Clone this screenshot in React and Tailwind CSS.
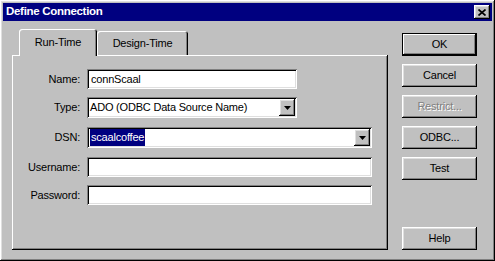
import React from 'react';

const raised =
  'shadow-[inset_-1px_-1px_#000,inset_1px_1px_#fff,inset_-2px_-2px_#808080,inset_2px_2px_#dfdfdf]';
const sunken =
  'shadow-[inset_1px_1px_#808080,inset_-1px_-1px_#fff,inset_2px_2px_#000,inset_-2px_-2px_#dfdfdf]';

// kleine schwarze Pfeilspitze für die Combo-Boxen
const DropArrow = () => (
  <svg width="7" height="4" viewBox="0 0 7 4">
    <polygon points="0,0 7,0 3.5,4" fill="#000" />
  </svg>
);

const TextBox = ({ width, children }) => (
  <div className={`h-[20px] bg-white flex items-center pl-[4px] ${sunken}`} style={{ width }}>
    {children}
  </div>
);

const ComboBox = ({ width, children }) => (
  <div className={`h-[21px] bg-white flex items-center pl-[3px] pr-[2px] ${sunken}`} style={{ width }}>
    <div className="flex-1 flex items-center">{children}</div>
    <div className={`w-[16px] h-[17px] bg-[#c0c0c0] flex items-center justify-center ${raised}`}>
      <DropArrow />
    </div>
  </div>
);

const Row = ({ label, mt, children }) => (
  <div className="flex items-center" style={{ marginTop: mt }}>
    <div className="w-[68px] text-right">{label}</div>
    <div className="ml-[7px]">{children}</div>
  </div>
);

const Btn = ({ children, def, disabled, className = '' }) => (
  <div
    className={`w-[75px] h-[23px] flex items-center justify-center ${
      def
        ? 'border border-black shadow-[inset_-1px_-1px_#000,inset_1px_1px_#fff,inset_-2px_-2px_#808080]'
        : raised
    } ${disabled ? 'text-[#808080] [text-shadow:1px_1px_0_#fff]' : ''} ${className}`}
  >
    {children}
  </div>
);

export default function App() {
  return (
    <div
      className={`w-[495px] h-[261px] bg-[#c0c0c0] p-[3px] flex flex-col text-[11px] tracking-[-0.2px] text-black ${raised}`}
      style={{ fontFamily: '"Liberation Sans", Arial, sans-serif' }}
    >
      {/* Titelleiste */}
      <div className="h-[18px] bg-[#000080] flex items-center justify-between pl-[3px] pr-[2px]">
        <span className="text-white font-bold text-[11.5px] tracking-[-0.3px]">Define Connection</span>
        <div className={`w-[16px] h-[14px] bg-[#c0c0c0] flex items-center justify-center ${raised}`}>
          <svg width="8" height="7" viewBox="0 0 8 7">
            <path d="M0.5 0.5 L7.5 6.5 M7.5 0.5 L0.5 6.5" stroke="#000" strokeWidth="1.7" />
          </svg>
        </div>
      </div>

      <div className="flex flex-1">
        {/* Register */}
        <div className="ml-[9px] w-[376px] flex flex-col">
          <div className="h-[34px] flex items-end pl-[7px]">
            <div className="relative z-10 -mb-px w-[78px] h-[27px] bg-[#c0c0c0] rounded-t-[3px] flex items-center justify-center pb-px shadow-[inset_1px_1px_#fff,inset_-1px_0_#000,inset_-2px_0_#808080]">
              Run-Time
            </div>
            <div className="w-[91px] h-[24px] rounded-t-[3px] flex items-center justify-center shadow-[inset_1px_1px_#fff,inset_-1px_0_#000,inset_-2px_0_#808080]">
              Design-Time
            </div>
          </div>
          <div className="h-[195px] pt-[14px] shadow-[inset_-1px_-1px_#000,inset_1px_1px_#fff,inset_-2px_-2px_#808080]">
            <Row label="Name:">
              <TextBox width={210}>connScaal</TextBox>
            </Row>
            <Row label="Type:" mt={8}>
              <ComboBox width={210}>ADO (ODBC Data Source Name)</ComboBox>
            </Row>
            <Row label="DSN:" mt={9}>
              <ComboBox width={285}>
                <span className="bg-[#000080] text-white px-[1px]">scaalcoffee</span>
              </ComboBox>
            </Row>
            <Row label="Username:" mt={9}>
              <TextBox width={285} />
            </Row>
            <Row label="Password:" mt={8}>
              <TextBox width={285} />
            </Row>
          </div>
        </div>

        {/* Schaltflächen */}
        <div className="ml-[14px] pt-[12px] flex flex-col gap-[8px]">
          <Btn def>OK</Btn>
          <Btn>Cancel</Btn>
          <Btn disabled>Restrict...</Btn>
          <Btn>ODBC...</Btn>
          <Btn>Test</Btn>
          <Btn className="mt-[39px]">Help</Btn>
        </div>
      </div>
    </div>
  );
}
